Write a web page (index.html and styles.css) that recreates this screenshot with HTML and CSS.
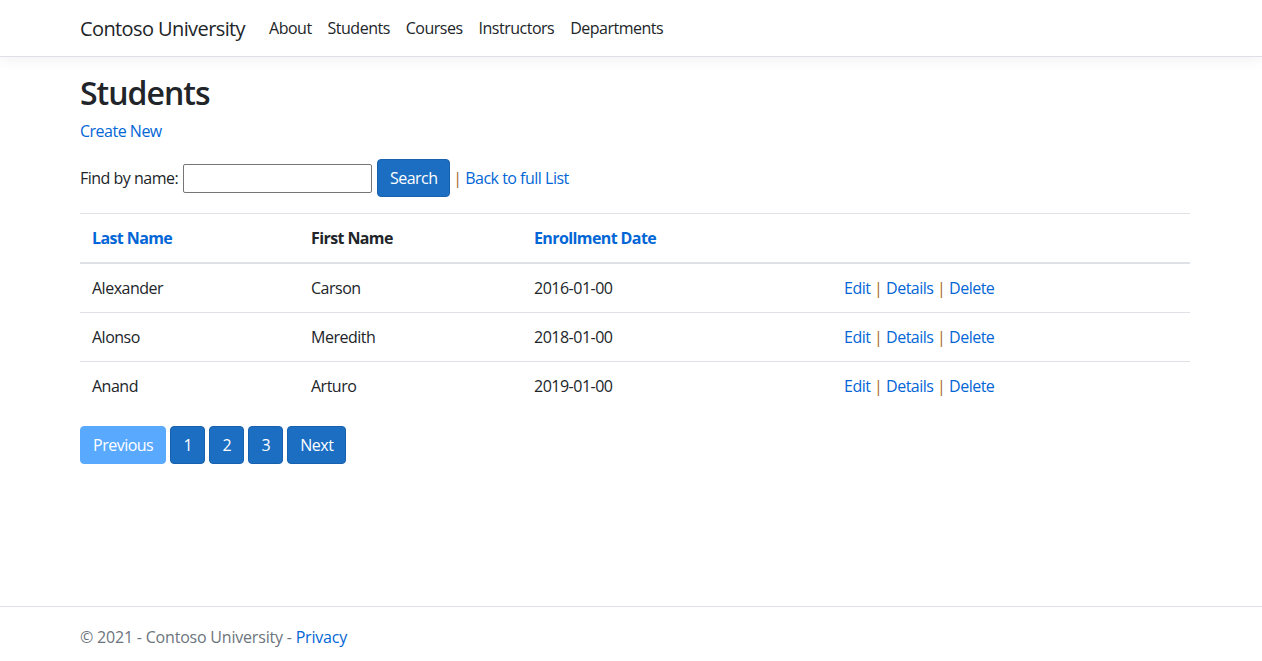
FILE: index.html
```html
<!DOCTYPE html>
<html lang="en">
<head>
<meta charset="utf-8">
<title>Students - Contoso University</title>
<link rel="stylesheet" href="styles.css">
</head>
<body>
<header class="navbar">
  <div class="container nav-inner">
    <a class="brand" href="#">Contoso University</a>
    <nav class="nav-links">
      <a href="#">About</a>
      <a href="#">Students</a>
      <a href="#">Courses</a>
      <a href="#">Instructors</a>
      <a href="#">Departments</a>
    </nav>
  </div>
</header>
<main class="container main">
  <h1 class="title">Students</h1>
  <p class="create"><a href="#">Create New</a></p>
  <form class="search-form">
    <span class="label">Find by name:</span>
    <input class="search-input" type="text">
    <button class="btn btn-primary search-btn" type="button">Search</button>
    <a class="back" href="#"><span class="pipe">|</span> Back to full List</a>
  </form>
  <table class="table">
    <thead>
      <tr>
        <th class="c1"><a href="#">Last Name</a></th>
        <th class="c2">First Name</th>
        <th class="c3"><a href="#">Enrollment Date</a></th>
        <th class="c4"></th>
      </tr>
    </thead>
    <tbody>
      <tr>
        <td>Alexander</td><td>Carson</td><td>2016-01-00</td>
        <td><a href="#">Edit</a> <span class="pipe">|</span> <a href="#">Details</a> <span class="pipe">|</span> <a href="#">Delete</a></td>
      </tr>
      <tr>
        <td>Alonso</td><td>Meredith</td><td>2018-01-00</td>
        <td><a href="#">Edit</a> <span class="pipe">|</span> <a href="#">Details</a> <span class="pipe">|</span> <a href="#">Delete</a></td>
      </tr>
      <tr>
        <td>Anand</td><td>Arturo</td><td>2019-01-00</td>
        <td><a href="#">Edit</a> <span class="pipe">|</span> <a href="#">Details</a> <span class="pipe">|</span> <a href="#">Delete</a></td>
      </tr>
    </tbody>
  </table>
  <div class="pager">
    <a class="btn btn-disabled" href="#">Previous</a>
    <a class="btn btn-primary" href="#">1</a>
    <a class="btn btn-primary" href="#">2</a>
    <a class="btn btn-primary" href="#">3</a>
    <a class="btn btn-primary" href="#">Next</a>
  </div>
</main>
<footer class="footer">
  <div class="container">&copy; 2021 - Contoso University - <a href="#">Privacy</a></div>
</footer>
</body>
</html>
```
FILE: styles.css
```css
* { box-sizing: border-box; }
html, body { height: 100%; }
body {
  margin: 0;
  font-family: "Open Sans", "Noto Sans", sans-serif;
  font-size: 16px;
  line-height: 24px;
  letter-spacing: -0.5px;
  color: #212529;
  background: #fff;
  display: flex;
  flex-direction: column;
  min-height: 100vh;
}
a { color: #0366d6; text-decoration: none; }
.container { width: 1110px; margin-left: 80px; }

.navbar {
  height: 57px;
  border-bottom: 1px solid #e0dfe8;
  box-shadow: 0 4px 12px rgba(0,0,0,.05);
  background: #fff;
}
.nav-inner { display: flex; align-items: center; height: 56px; }
.brand { font-size: 20px; color: #212529; margin-right: 16px; letter-spacing: -0.6px; line-height: 30px; padding-top: 2px; }
.nav-links { display: flex; }
.nav-links a { color: #212529; padding: 8px 8px; }

.main { flex: 1; padding-top: 14px; }
.title { font-size: 32px; font-weight: 600; line-height: 44px; margin: 0 0 4px 0; letter-spacing: -1px; }
.create { margin: 0 0 16px; }

.search-form { display: flex; align-items: center; margin: 0 0 16px; height: 38px; }
.label { margin-right: 5px; }
.search-input {
  width: 189px; height: 29px;
  border: 1px solid #767676; border-radius: 2px;
  margin: 0 5px 0 0; padding: 0 4px; font: inherit;
}
.back { margin-left: 3px; }
.pipe { color: #a86a2a; }

.btn {
  display: inline-flex; align-items: center; justify-content: center;
  height: 38px; padding: 0 12px; border-radius: 4px;
  font: inherit; letter-spacing: inherit; color: #fff; border: 1px solid transparent;
}
.btn-primary { background: #1b6ec2; border-color: #1861ac; }
.btn-disabled { background: #59a9ff; border-color: #59a9ff; }
.search-btn { cursor: pointer; width: 73px; }

.table { width: 1110px; border-collapse: collapse; margin-bottom: 16px; }
.table th, .table td { padding: 12px; text-align: left; border-top: 1px solid #dee2e6; vertical-align: top; }
.table th { font-weight: 700; border-bottom: 2px solid #dee2e6; letter-spacing: -0.6px; }
.c1 { width: 219px; }
.c2 { width: 223px; }
.c3 { width: 310px; }

.pager { display: flex; gap: 4px; }
.pager .btn-primary { min-width: 35px; }

.footer {
  border-top: 1px solid #dee2e6;
  height: 55px;
  line-height: 60px;
  color: #6c757d;
  letter-spacing: -0.2px;
}
```
